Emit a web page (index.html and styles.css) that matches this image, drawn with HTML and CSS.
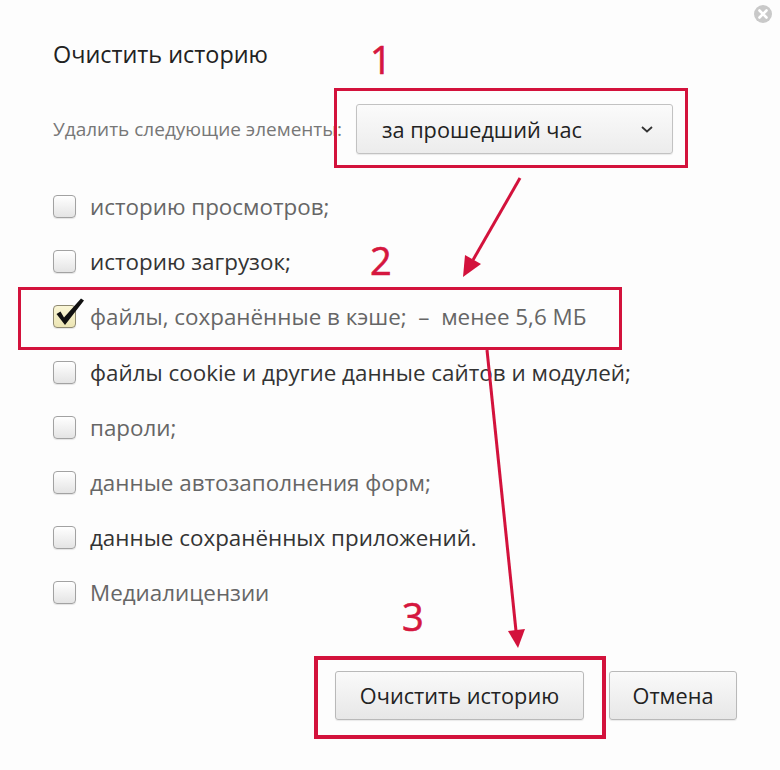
FILE: index.html
```html
<!DOCTYPE html>
<html lang="ru">
<head>
<meta charset="utf-8">
<title>Очистить историю</title>
<link rel="stylesheet" href="styles.css">
</head>
<body>
<div class="dialog">
  <button class="close" aria-label="Закрыть">
    <svg width="18" height="18" viewBox="0 0 18 18"><circle cx="9" cy="9" r="9" fill="#c9c9c9"/><path d="M5.5 5.5 L12.5 12.5 M12.5 5.5 L5.5 12.5" stroke="#fff" stroke-width="2.6" stroke-linecap="round"/></svg>
  </button>

  <h1 class="title">Очистить историю</h1>

  <div class="range-row">
    <span class="range-label">Удалить следующие элементы:</span>
    <div class="select">
      <span>за прошедший час</span>
      <svg class="chevron" width="12" height="7" viewBox="0 0 12 7"><path d="M1 1 L6 5.5 L11 1" fill="none" stroke="#333" stroke-width="1.8"/></svg>
    </div>
  </div>

  <ul class="options">
    <li class="option light"><span class="box"></span>историю просмотров;</li>
    <li class="option dark"><span class="box"></span>историю загрузок;</li>
    <li class="option light"><span class="box checked"><svg class="tick" width="34" height="30" viewBox="0 0 34 30"><path d="M3.5 16 L7.5 13.5 L11 19.5 L28 0.5 L31 2.5 L12 27 Z" fill="#111"/></svg></span>файлы, сохранённые в кэше;&nbsp; –&nbsp; менее 5,6 МБ</li>
    <li class="option dark"><span class="box"></span>файлы cookie и другие данные сайтов и модулей;</li>
    <li class="option light"><span class="box"></span>пароли;</li>
    <li class="option light"><span class="box"></span>данные автозаполнения форм;</li>
    <li class="option dark"><span class="box"></span>данные сохранённых приложений.</li>
    <li class="option light"><span class="box"></span>Медиалицензии</li>
  </ul>

  <div class="actions">
    <button class="btn btn-clear">Очистить историю</button>
    <button class="btn btn-cancel">Отмена</button>
  </div>

  <div class="annot-box annot-box-1"></div>
  <div class="annot-box annot-box-2"></div>
  <div class="annot-box annot-box-3"></div>
  <span class="annot-num num-1">1</span>
  <span class="annot-num num-2">2</span>
  <span class="annot-num num-3">3</span>
  <svg class="arrows" width="780" height="770" viewBox="0 0 780 770">
    <line x1="520" y1="178" x2="473" y2="260" stroke="#d3123c" stroke-width="3"/>
    <polygon points="463,277 481,264 465,255" fill="#d3123c"/>
    <line x1="487" y1="350" x2="516" y2="631" stroke="#d3123c" stroke-width="3"/>
    <polygon points="518,648 525,629 508,631" fill="#d3123c"/>
  </svg>
</div>
</body>
</html>
```
FILE: styles.css
```css
* { box-sizing: border-box; }
html, body { margin: 0; padding: 0; }
body {
  width: 780px;
  height: 770px;
  overflow: hidden;
  background: #fdfdfd;
  font-family: "Open Sans", "Noto Sans", sans-serif;
}
.dialog {
  position: relative;
  width: 780px;
  height: 770px;
  padding: 38px 43px 0 53px;
  background: #fdfdfd;
}
.close {
  position: absolute;
  top: 5px;
  left: 754px;
  width: 18px;
  height: 18px;
  padding: 0;
  border: 0;
  background: none;
}
.close svg { display: block; }
.title {
  margin: 0;
  font-size: 23.4px;
  line-height: 32px;
  font-weight: 400;
  color: #222;
}
.range-row {
  margin-top: 34px;
  height: 50px;
  display: flex;
  align-items: center;
}
.range-label {
  width: 303px;
  flex: none;
  font-size: 19px;
  color: #777;
  white-space: nowrap;
}
.select {
  width: 317px;
  height: 50px;
  display: flex;
  align-items: center;
  justify-content: space-between;
  padding: 0 19px 0 25px;
  border: 1px solid #c2c2c2;
  border-radius: 3px;
  background: linear-gradient(#fbfbfb, #ececec);
  box-shadow: 0 1px 1px rgba(0,0,0,0.08);
  font-size: 21.7px;
  color: #222;
}
.chevron { display: block; }
.options {
  list-style: none;
  margin: 25px 0 0;
  padding: 0;
}
.option {
  height: 55.2px;
  display: flex;
  align-items: center;
  gap: 14px;
  font-size: 22.4px;
  white-space: nowrap;
}
.option.light { color: #666; }
.option.dark { color: #333; }
.box {
  position: relative;
  flex: none;
  width: 23px;
  height: 23px;
  border: 1px solid #a2a2a2;
  border-radius: 4px;
  background: linear-gradient(#ffffff, #e4e4e4);
  box-shadow: 0 1px 1px rgba(0,0,0,0.1);
}
.box.checked {
  border-color: #8f8a72;
  background: linear-gradient(#faf6d6, #ece5b4);
}
.tick {
  position: absolute;
  left: -1px;
  top: -8px;
}
.actions {
  margin-top: 50px;
  display: flex;
  justify-content: flex-end;
  gap: 25px;
}
.btn {
  height: 49px;
  border: 1px solid #b9b9b9;
  border-radius: 3px;
  background: linear-gradient(#fafafa, #e7e7e7);
  box-shadow: 0 1px 1px rgba(0,0,0,0.08);
  font-family: "Open Sans", "Noto Sans", sans-serif;
  font-size: 21.7px;
  color: #222;
  padding: 0;
}
.btn-clear { width: 249px; }
.btn-cancel { width: 128px; }
.annot-box {
  position: absolute;
  border: 3px solid #d3123c;
  pointer-events: none;
}
.annot-box-1 { left: 334px; top: 88px; width: 354px; height: 80px; }
.annot-box-2 { left: 18px; top: 287px; width: 604px; height: 63px; }
.annot-box-3 { left: 314px; top: 656px; width: 292px; height: 83px; border-width: 4px; }
.annot-num {
  position: absolute;
  font-size: 38px;
  line-height: 1;
  color: #d5173e;
  -webkit-text-stroke: 0.6px #d5173e;
}
.num-1 { left: 370px; top: 40px; }
.num-2 { left: 370px; top: 241px; }
.num-3 { left: 402px; top: 597px; }
.arrows {
  position: absolute;
  left: 0;
  top: 0;
  pointer-events: none;
}
```
